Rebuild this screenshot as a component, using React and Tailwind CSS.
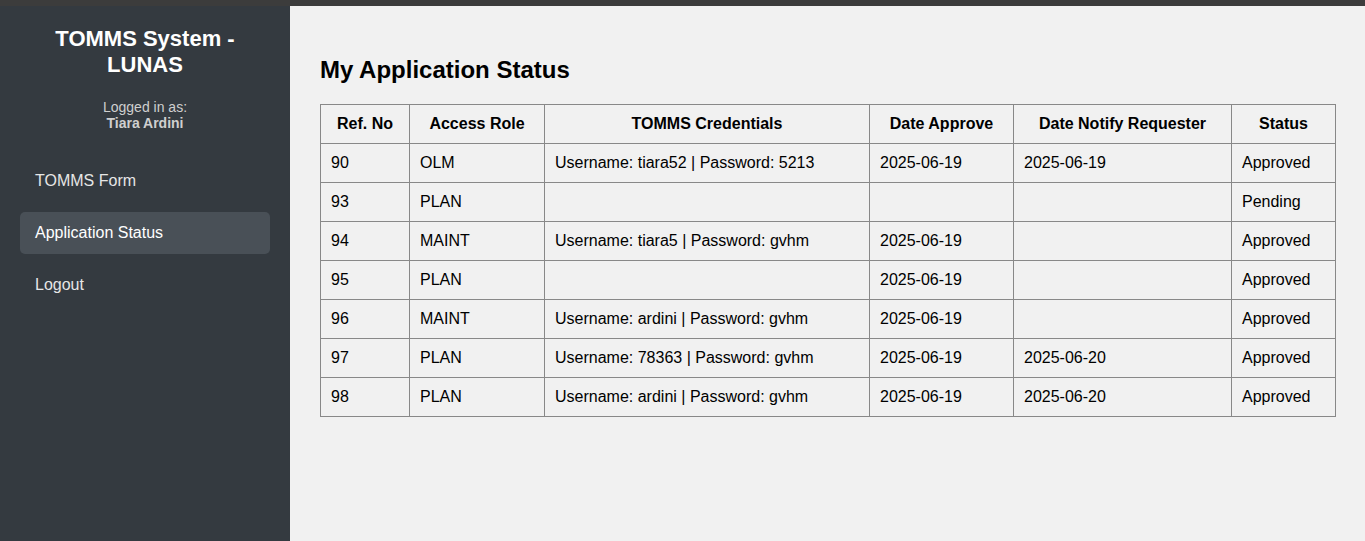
export default function App() {
  const rows = [
    ["90", "OLM", "Username: tiara52 | Password: 5213", "2025-06-19", "2025-06-19", "Approved"],
    ["93", "PLAN", "", "", "", "Pending"],
    ["94", "MAINT", "Username: tiara5 | Password: gvhm", "2025-06-19", "", "Approved"],
    ["95", "PLAN", "", "2025-06-19", "", "Approved"],
    ["96", "MAINT", "Username: ardini | Password: gvhm", "2025-06-19", "", "Approved"],
    ["97", "PLAN", "Username: 78363 | Password: gvhm", "2025-06-19", "2025-06-20", "Approved"],
    ["98", "PLAN", "Username: ardini | Password: gvhm", "2025-06-19", "2025-06-20", "Approved"],
  ];
  const heads = ["Ref. No", "Access Role", "TOMMS Credentials", "Date Approve", "Date Notify Requester", "Status"];
  const widths = ["w-[89px]", "w-[135px]", "w-[325px]", "w-[144px]", "w-[218px]", "w-[104px]"];
  return (
    <div className="flex flex-col h-[541px] w-full overflow-hidden font-['Liberation_Sans',Arial,sans-serif]">
      <div className="h-[6px] bg-[#3c3c3c] shrink-0" />
      <div className="flex flex-1 min-h-0">
        <aside className="w-[290px] shrink-0 bg-[#343a40] px-5 pt-5">
          <h2 className="text-center text-white font-bold text-[22px] leading-[26px] m-0">
            TOMMS System -<br />LUNAS
          </h2>
          <div className="text-center text-[#cfcfcf] text-[14px] leading-4 mt-[21px]">
            <div>Logged in as:</div>
            <div className="font-bold text-[14px]">Tiara Ardini</div>
          </div>
          <nav className="flex flex-col gap-[10px] mt-[29px]">
            <a className="block px-[15px] py-3 rounded-[5px] text-[#e6e6e6] text-[16px] leading-[18px]">TOMMS Form</a>
            <a className="block px-[15px] py-3 rounded-[5px] bg-[#495057] text-white text-[16px] leading-[18px]">Application Status</a>
            <a className="block px-[15px] py-3 rounded-[5px] text-[#e6e6e6] text-[16px] leading-[18px]">Logout</a>
          </nav>
        </aside>
        <main className="flex-1 bg-[#f1f1f1] p-[30px]">
          <h2 className="text-[24px] leading-[28px] font-bold text-black mt-[20px] mb-[20px]">My Application Status</h2>
          <table className="w-full border-collapse text-[16px] text-black table-fixed">
            <colgroup>
              {widths.map((w, i) => (
                <col key={i} className={w} />
              ))}
            </colgroup>
            <thead>
              <tr>
                {heads.map((h) => (
                  <th key={h} className="border border-[#888] px-[10px] py-[10px] font-bold text-center leading-[18px]">
                    {h}
                  </th>
                ))}
              </tr>
            </thead>
            <tbody>
              {rows.map((r) => (
                <tr key={r[0]}>
                  {r.map((c, i) => (
                    <td key={i} className="border border-[#888] px-[10px] py-[10px] text-left leading-[18px] h-[39px]">
                      {c}
                    </td>
                  ))}
                </tr>
              ))}
            </tbody>
          </table>
        </main>
      </div>
    </div>
  );
}
